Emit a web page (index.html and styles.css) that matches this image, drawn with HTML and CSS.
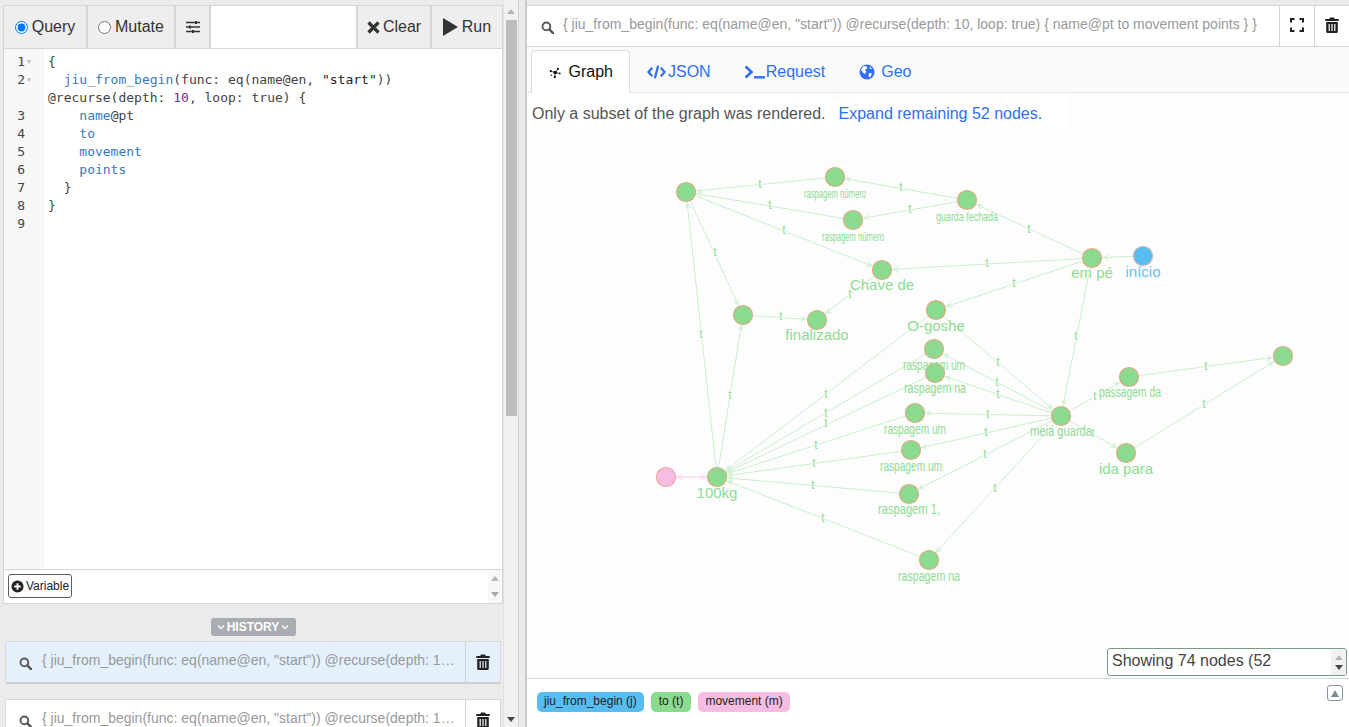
FILE: index.html
```html
<!DOCTYPE html>
<html lang="en">
<head>
    <meta charset="UTF-8">
    <title>Dgraph Ratel</title>
    <link rel="stylesheet" href="styles.css">
</head>
<body>
    <svg class="icon-defs" xmlns="http://www.w3.org/2000/svg">
        <symbol id="icon-search" viewBox="0 0 14 14">
            <circle cx="5.8" cy="5.8" r="4.2" fill="none" stroke="currentColor" stroke-width="2"></circle>
            <line x1="9" y1="9" x2="13" y2="13" stroke="currentColor" stroke-width="2.6" stroke-linecap="round"></line>
        </symbol>
        <symbol id="icon-trash" viewBox="0 0 14 16">
            <path d="M5 0.5h4l0.8 1.5H13a0.8 0.8 0 0 1 0.8 0.8V4H0.2V2.8A0.8 0.8 0 0 1 1 2h3.2z" fill="currentColor"></path>
            <path fill-rule="evenodd" d="M1.2 5h11.6v9.5a1.5 1.5 0 0 1-1.5 1.5H2.7a1.5 1.5 0 0 1-1.5-1.5zM3.6 7v7h1.2V7zM6.4 7v7h1.2V7zM9.2 7v7h1.2V7z" fill="currentColor"></path>
        </symbol>
        <marker id="arrow" markerUnits="userSpaceOnUse" markerWidth="30" markerHeight="14" refX="10" refY="0" orient="auto" viewBox="-20 -7 30 14">
            <path d="M-7 -3.500L0 0L-7 3.500L-4.500 0z" fill="#d5f1d7"></path>
        </marker>
        <marker id="arrow-pink" markerUnits="userSpaceOnUse" markerWidth="30" markerHeight="14" refX="10" refY="0" orient="auto" viewBox="-20 -7 30 14">
            <path d="M-7 -3.500L0 0L-7 3.500L-4.500 0z" fill="#f9dcf0"></path>
        </marker>
    </svg>

    <div class="left-pane">
        <div class="query-box">
            <div class="toolbar">
                <label class="tool-btn query-btn"><input type="radio" name="action" checked> Query</label>
                <label class="tool-btn mutate-btn"><input type="radio" name="action"> Mutate</label>
                <button class="tool-btn settings-btn">
                    <svg viewBox="0 0 16 14" width="16" height="14">
                        <path d="M1 2.500h14M1 7h14M1 11.500h14" stroke="#333" stroke-width="1.400"></path>
                        <path d="M10 1h2v3h-2zM4 5.500h2v3H4zM7 10h2v3H7z" fill="#333"></path>
                    </svg>
                </button>
                <div class="toolbar-gap"></div>
                <button class="tool-btn clear-btn">
                    <svg viewBox="0 0 13 13" width="13" height="13"><path d="M1.500 1.500L11.500 11.500M11.500 1.500L1.500 11.500" stroke="#333" stroke-width="3.200"></path></svg>
                    Clear
                </button>
                <button class="tool-btn run-btn">
                    <svg viewBox="0 0 15 18" width="15" height="18"><path d="M0 0L15 9L0 18z" fill="#333"></path></svg>
                    Run
                </button>
            </div>
            <div class="editor">
                <div class="code-line"><span class="ln">1</span><span class="fold">▾</span><span class="code">{</span></div>
                <div class="code-line"><span class="ln">2</span><span class="fold">▾</span><span class="code">  <span class="cm-def">jiu_from_begin</span>(func: eq(name@en, <span class="cm-str">"start"</span>)) @recurse(depth: <span class="cm-num">10</span>, loop: true) {</span></div>
                <div class="code-line"><span class="ln">3</span><span class="fold"></span><span class="code">    <span class="cm-def">name</span>@pt</span></div>
                <div class="code-line"><span class="ln">4</span><span class="fold"></span><span class="code">    <span class="cm-def">to</span></span></div>
                <div class="code-line"><span class="ln">5</span><span class="fold"></span><span class="code">    <span class="cm-def">movement</span></span></div>
                <div class="code-line"><span class="ln">6</span><span class="fold"></span><span class="code">    <span class="cm-def">points</span></span></div>
                <div class="code-line"><span class="ln">7</span><span class="fold"></span><span class="code">  }</span></div>
                <div class="code-line"><span class="ln">8</span><span class="fold"></span><span class="code">}</span></div>
                <div class="code-line"><span class="ln">9</span><span class="fold"></span><span class="code"></span></div>
            </div>
            <div class="variables">
                <button class="variable-btn">
                    <svg viewBox="0 0 14 14" width="13" height="13">
                        <circle cx="7" cy="7" r="6.500" fill="#222"></circle>
                        <path d="M7 3.500v7M3.500 7h7" stroke="#fff" stroke-width="2"></path>
                    </svg>
                    Variable
                </button>
                <div class="mini-scroll"><span class="arrow-up"></span><span class="arrow-down"></span></div>
            </div>
        </div>

        <div class="history-row">
            <div class="history-chip">
                <svg viewBox="0 0 8 6" width="8" height="6"><path d="M1 1.500L4 4.500L7 1.500" fill="none" stroke="#fff" stroke-width="1.300"></path></svg>
                HISTORY
                <svg viewBox="0 0 8 6" width="8" height="6"><path d="M1 1.500L4 4.500L7 1.500" fill="none" stroke="#fff" stroke-width="1.300"></path></svg>
            </div>
        </div>

        <div class="history-card selected">
            <svg class="search-icon"><use href="#icon-search"></use></svg>
            <div class="history-text">{ jiu_from_begin(func: eq(name@en, "start")) @recurse(depth: 10, loop: true) { name@pt to movement points } }</div>
            <div class="history-trash"><svg class="trash-icon"><use href="#icon-trash"></use></svg></div>
        </div>
        <div class="history-card">
            <svg class="search-icon"><use href="#icon-search"></use></svg>
            <div class="history-text">{ jiu_from_begin(func: eq(name@en, "start")) @recurse(depth: 10, loop: true) { name@pt to movement points } }</div>
            <div class="history-trash"><svg class="trash-icon"><use href="#icon-trash"></use></svg></div>
        </div>
    </div>

    <div class="page-scroll">
        <span class="arrow-up"></span>
        <div class="page-thumb"></div>
        <span class="arrow-down"></span>
    </div>

    <div class="splitter"></div>

    <div class="right-pane">
        <div class="result-bar">
            <svg class="search-icon"><use href="#icon-search"></use></svg>
            <div class="result-query">{ jiu_from_begin(func: eq(name@en, "start")) @recurse(depth: 10, loop: true) { name@pt to movement points } }</div>
            <div class="bar-action">
                <svg viewBox="0 0 14 14" width="14" height="14"><path d="M1 4.500V1h3.500M9.500 1H13v3.500M13 9.500V13H9.500M4.500 13H1V9.500" fill="none" stroke="#222" stroke-width="2"></path></svg>
            </div>
            <div class="bar-action">
                <svg class="trash-icon"><use href="#icon-trash"></use></svg>
            </div>
        </div>

        <div class="tabs">
            <div class="tab active">
                <svg viewBox="0 0 14 14" width="13" height="13">
                    <path d="M7 7L2 5.500M7 7L10 3M7 7L12 8M7 7L6.500 12" stroke="#111" stroke-width="0.800"></path>
                    <circle cx="7" cy="7" r="2" fill="#111"></circle>
                    <circle cx="2" cy="5.500" r="1.200" fill="#111"></circle>
                    <circle cx="10" cy="3" r="1.200" fill="#111"></circle>
                    <circle cx="12" cy="8" r="1" fill="#111"></circle>
                    <circle cx="6.500" cy="12" r="1.300" fill="#111"></circle>
                    <circle cx="2.500" cy="10" r="0.800" fill="#111"></circle>
                </svg>
                Graph
            </div>
            <div class="tab">
                <svg viewBox="0 0 20 14" width="19" height="14"><path d="M5.500 2.500L1.500 7L5.500 11.500M14.500 2.500L18.500 7L14.500 11.500M11.700 0.500L8.300 13.500" fill="none" stroke="#2f6ef5" stroke-width="2.400"></path></svg>
                <span>JSON</span>
            </div>
            <div class="tab">
                <svg viewBox="0 0 22 14" width="22" height="14"><path d="M1.500 1.500L7.500 7L1.500 12.500" fill="none" stroke="#2f6ef5" stroke-width="2.600"></path><path d="M10 12.300h11" stroke="#2f6ef5" stroke-width="2.400"></path></svg>
                <span>Request</span>
            </div>
            <div class="tab">
                <svg viewBox="0 0 16 16" width="16" height="16">
                    <circle cx="8" cy="8" r="7.500" fill="#2f6ef5"></circle>
                    <path d="M4 2.500L7 2L8.500 4L6 6L7.500 8L5.500 10L3 7.500L2 6zM10 9L13 9.500L11 13.500L9.500 12zM10.500 2.500L13 4.500L11 5z" fill="#fff"></path>
                </svg>
                <span>Geo</span>
            </div>
        </div>

        <div class="graph-area">
            <svg class="graph" xmlns="http://www.w3.org/2000/svg" viewBox="527 93 822 585" width="822" height="585">
                <g class="edges">
                    <line x1="835" y1="177" x2="686" y2="192"></line>
                    <line x1="967" y1="200" x2="835" y2="177"></line>
                    <line x1="967" y1="200" x2="853" y2="220"></line>
                    <line x1="853" y1="220" x2="686" y2="192"></line>
                    <line x1="686" y1="192" x2="882" y2="270"></line>
                    <line x1="686" y1="192" x2="743" y2="315"></line>
                    <line x1="717" y1="477" x2="686" y2="192"></line>
                    <line x1="717" y1="477" x2="743" y2="315"></line>
                    <line x1="743" y1="315" x2="817" y2="320"></line>
                    <line x1="882" y1="270" x2="817" y2="320"></line>
                    <line x1="1092" y1="258" x2="882" y2="270"></line>
                    <line x1="1092" y1="258" x2="967" y2="200"></line>
                    <line x1="1092" y1="258" x2="936" y2="310"></line>
                    <line x1="1143" y1="256" x2="1092" y2="258"></line>
                    <line x1="1092" y1="258" x2="1061" y2="416"></line>
                    <line x1="936" y1="310" x2="1061" y2="416"></line>
                    <line x1="1061" y1="416" x2="934" y2="349"></line>
                    <line x1="1061" y1="416" x2="935" y2="373"></line>
                    <line x1="1061" y1="416" x2="915" y2="413"></line>
                    <line x1="1061" y1="416" x2="911" y2="450"></line>
                    <line x1="1061" y1="416" x2="909" y2="494"></line>
                    <line x1="1061" y1="416" x2="929" y2="560"></line>
                    <line x1="1061" y1="416" x2="1129" y2="377"></line>
                    <line x1="1061" y1="416" x2="1126" y2="453"></line>
                    <line x1="1129" y1="377" x2="1283" y2="356"></line>
                    <line x1="1126" y1="453" x2="1283" y2="356"></line>
                    <line x1="936" y1="310" x2="717" y2="477"></line>
                    <line x1="934" y1="349" x2="717" y2="477"></line>
                    <line x1="935" y1="373" x2="717" y2="477"></line>
                    <line x1="915" y1="413" x2="717" y2="477"></line>
                    <line x1="911" y1="450" x2="717" y2="477"></line>
                    <line x1="909" y1="494" x2="717" y2="477"></line>
                    <line x1="929" y1="560" x2="717" y2="477"></line>
                    <line class="edge-pink" x1="666" y1="477" x2="717" y2="477"></line>
                    <line class="edge-pink" x1="717" y1="477" x2="666" y2="477"></line>
                </g>
                <g class="edge-labels">
                    <text x="760" y="188">t</text>
                    <text x="901" y="191">t</text>
                    <text x="910" y="213">t</text>
                    <text x="770" y="209">t</text>
                    <text x="784" y="234">t</text>
                    <text x="715" y="256">t</text>
                    <text x="701" y="338">t</text>
                    <text x="730" y="399">t</text>
                    <text x="781" y="320">t</text>
                    <text x="850" y="298">t</text>
                    <text x="987" y="267">t</text>
                    <text x="1029" y="233">t</text>
                    <text x="1014" y="287">t</text>
                    <text x="1076" y="340">t</text>
                    <text x="998" y="366">t</text>
                    <text x="997" y="386">t</text>
                    <text x="998" y="398">t</text>
                    <text x="988" y="418">t</text>
                    <text x="986" y="436">t</text>
                    <text x="985" y="458">t</text>
                    <text x="995" y="492">t</text>
                    <text x="1095" y="400">t</text>
                    <text x="1093" y="437">t</text>
                    <text x="1206" y="370">t</text>
                    <text x="1204" y="408">t</text>
                    <text x="826" y="398">t</text>
                    <text x="826" y="417">t</text>
                    <text x="826" y="427">t</text>
                    <text x="816" y="449">t</text>
                    <text x="814" y="467">t</text>
                    <text x="813" y="489">t</text>
                    <text x="823" y="522">t</text>
                </g>
                <g class="nodes">
                    <circle cx="686" cy="192" r="9.500"></circle>
                    <circle cx="835" cy="177" r="9.500"></circle>
                    <circle cx="853" cy="220" r="9.500"></circle>
                    <circle cx="967" cy="200" r="9.500"></circle>
                    <circle cx="1092" cy="258" r="9.500"></circle>
                    <circle class="node-blue" cx="1143" cy="256" r="9.500"></circle>
                    <circle cx="882" cy="270" r="9.500"></circle>
                    <circle cx="936" cy="310" r="9.500"></circle>
                    <circle cx="743" cy="315" r="9.500"></circle>
                    <circle cx="817" cy="320" r="9.500"></circle>
                    <circle cx="934" cy="349" r="9.500"></circle>
                    <circle cx="935" cy="373" r="9.500"></circle>
                    <circle cx="1129" cy="377" r="9.500"></circle>
                    <circle cx="1283" cy="356" r="9.500"></circle>
                    <circle cx="1061" cy="416" r="9.500"></circle>
                    <circle cx="915" cy="413" r="9.500"></circle>
                    <circle cx="911" cy="450" r="9.500"></circle>
                    <circle cx="1126" cy="453" r="9.500"></circle>
                    <circle class="node-pink" cx="666" cy="477" r="9.500"></circle>
                    <circle cx="717" cy="477" r="9.500"></circle>
                    <circle cx="909" cy="494" r="9.500"></circle>
                    <circle cx="929" cy="560" r="9.500"></circle>
                </g>
                <g class="node-labels">
                    <text x="882" y="290">Chave de</text>
                    <text x="936" y="331">O-goshe</text>
                    <text x="817" y="340">finalizado</text>
                    <text x="1092" y="278">em pé</text>
                    <text class="label-blue" x="1143" y="277">início</text>
                    <text x="1126" y="474">ida para</text>
                    <text x="717" y="498">100kg</text>
                </g>
                <g class="node-labels small">
                    <text class="tiny" x="835" y="198" textLength="62" lengthAdjust="spacingAndGlyphs">raspagem número</text>
                    <text class="tiny" x="853" y="241" textLength="62" lengthAdjust="spacingAndGlyphs">raspagem número</text>
                    <text class="tiny" x="967" y="221" textLength="62" lengthAdjust="spacingAndGlyphs">guarda fechada</text>
                    <text x="934" y="370" textLength="62" lengthAdjust="spacingAndGlyphs">raspagem um</text>
                    <text x="935" y="393" textLength="62" lengthAdjust="spacingAndGlyphs">raspagem na</text>
                    <text x="1130" y="397" textLength="62" lengthAdjust="spacingAndGlyphs">passagem da</text>
                    <text x="1061" y="436" textLength="62" lengthAdjust="spacingAndGlyphs">meia guarda</text>
                    <text x="915" y="434" textLength="62" lengthAdjust="spacingAndGlyphs">raspagem um</text>
                    <text x="911" y="471" textLength="62" lengthAdjust="spacingAndGlyphs">raspagem um</text>
                    <text x="909" y="514" textLength="62" lengthAdjust="spacingAndGlyphs">raspagem 1,</text>
                    <text x="929" y="581" textLength="62" lengthAdjust="spacingAndGlyphs">raspagem na</text>
                </g>
            </svg>

            <div class="partial-notice">
                <span>Only a subset of the graph was rendered.</span>
                <a class="expand-link">Expand remaining 52 nodes.</a>
            </div>

            <div class="showing-box">
                <span class="showing-text">Showing 74 nodes (52</span>
                <div class="mini-scroll"><span class="arrow-up"></span><span class="arrow-down dark"></span></div>
            </div>
        </div>

        <div class="legend">
            <span class="pill pill-blue">jiu_from_begin (j)</span>
            <span class="pill pill-green">to (t)</span>
            <span class="pill pill-pink">movement (m)</span>
            <button class="legend-toggle"><span class="arrow-up"></span></button>
        </div>
    </div>
</body>
</html>
```

FILE: styles.css
```css
:root {
    --border: #d6d6d6;
    --panel-bg: #ebebeb;
    --btn-bg: #eeeeee;
    --blue: #2f6ef5;
    --node-green: #8adb90;
    --text: #333333;
}

* {
    box-sizing: border-box;
    font-family: "Liberation Sans", Arial, sans-serif;
}

html, body {
    height: 100%;
    overflow: hidden;
}

body {
    margin: 0;
    background-color: var(--panel-bg);
    color: var(--text);
    display: flex;
}

.icon-defs {
    width: 0;
    height: 0;
    position: absolute;
    overflow: visible;
}

.left-pane {
    width: 503px;
    flex: none;
    padding: 5px 0 0 3px;
    overflow: hidden;
}

.query-box {
    width: 500px;
    height: 599px;
    background-color: #fff;
    border: 1px solid var(--border);
    display: flex;
    flex-direction: column;
}

.toolbar {
    height: 43px;
    flex: none;
    display: flex;
    border-bottom: 1px solid var(--border);
}

.tool-btn {
    background-color: var(--btn-bg);
    border: 0;
    border-right: 2px solid var(--border);
    font-size: 16px;
    color: var(--text);
    padding: 0;
    display: flex;
    align-items: center;
    justify-content: center;
    gap: 4px;
}

.tool-btn input {
    margin: 0;
    width: 13px;
    height: 13px;
}

.query-btn {
    width: 84px;
}

.mutate-btn {
    width: 88px;
}

.settings-btn {
    width: 35px;
}

.toolbar-gap {
    flex: 1;
    border-right: 2px solid var(--border);
}

.clear-btn {
    width: 74px;
    gap: 3px;
}

.run-btn {
    width: 70px;
    border-right: 0;
    gap: 4px;
}

.editor {
    flex: 1;
    padding-top: 4px;
    background: linear-gradient(to right, #f7f7f7 40px, #fff 40px);
    font-size: 13px;
    line-height: 18px;
}

.code-line {
    display: flex;
}

.ln {
    width: 21px;
    flex: none;
    text-align: right;
    color: #444;
    font-family: "DejaVu Sans Mono", monospace;
}

.fold {
    width: 23px;
    flex: none;
    padding-left: 2px;
    font-size: 8px;
    color: #c4c4c4;
}

.code {
    width: 448px;
    white-space: pre-wrap;
    font-family: "DejaVu Sans Mono", monospace;
    color: #444;
}

.cm-def {
    color: #3a78bd;
    font-family: inherit;
}

.cm-str {
    color: #222;
    font-family: inherit;
}

.cm-num {
    color: #7a2a90;
    font-family: inherit;
}

.variables {
    height: 34px;
    flex: none;
    border-top: 1px solid var(--border);
    padding: 4px 0 0 4px;
    display: flex;
    justify-content: space-between;
}

.variable-btn {
    width: 64px;
    height: 24px;
    padding: 0 0 0 2px;
    background-color: #fff;
    border: 1px solid #555e68;
    border-radius: 3px;
    font-size: 12px;
    color: #222;
    display: flex;
    align-items: center;
    gap: 2px;
}

.mini-scroll {
    width: 14px;
    margin-top: -4px;
    display: flex;
    flex-direction: column;
    justify-content: space-around;
    align-items: center;
    background-color: #f8f8f8;
}

.arrow-up,
.arrow-down {
    display: block;
    width: 0;
    height: 0;
    border-left: 4px solid transparent;
    border-right: 4px solid transparent;
}

.arrow-up {
    border-bottom: 5px solid #b5b5b5;
}

.arrow-down {
    border-top: 5px solid #a8a8a8;
}

.arrow-down.dark {
    border-top-color: #444;
}

.history-row {
    height: 38px;
    display: flex;
    justify-content: center;
    align-items: center;
    padding-top: 7px;
}

.history-chip {
    width: 85px;
    height: 18px;
    background-color: #a9acb0;
    border-radius: 3px;
    color: #fff;
    font-size: 12px;
    font-weight: bold;
    display: flex;
    align-items: center;
    justify-content: center;
    gap: 2px;
}

.history-card {
    width: 496px;
    height: 43px;
    margin: -1px 0 16px 2px;
    background-color: #fff;
    border: 1px solid #d8d8d8;
    border-bottom: 2px solid #cfcfcf;
    border-radius: 2px;
    display: flex;
    align-items: center;
}

.history-card.selected {
    background-color: #e5f0fd;
}

.history-card .search-icon {
    margin-left: 13px;
}

.search-icon {
    width: 13px;
    height: 13px;
    flex: none;
    color: #555;
    margin-top: 3px;
}

.history-text {
    width: 423px;
    flex: none;
    margin: 0 0 5px 10px;
    padding-right: 9px;
    font-size: 14px;
    color: #999;
    white-space: nowrap;
    overflow: hidden;
    text-overflow: ellipsis;
}

.history-trash {
    width: 35px;
    height: 100%;
    flex: none;
    border-left: 1px solid #d2d2d2;
    display: flex;
    align-items: center;
    justify-content: center;
}

.trash-icon {
    width: 14px;
    height: 16px;
    color: #222;
}

.page-scroll {
    width: 16px;
    flex: none;
    background-color: #f1f1f1;
    border-left: 1px solid #e2e2e2;
    border-right: 1px solid #d2d2d2;
    display: flex;
    flex-direction: column;
    align-items: center;
    padding-top: 9px;
}

.page-thumb {
    width: 11px;
    height: 396px;
    margin-top: 6px;
    background-color: #bdbdbd;
}

.page-scroll .arrow-down {
    margin-top: auto;
    margin-bottom: 5px;
    border-top-color: #444;
}

.splitter {
    width: 8px;
    flex: none;
    background-color: var(--panel-bg);
    border-right: 2px solid #cccccc;
}

.right-pane {
    flex: 1;
    min-width: 0;
    padding-top: 5px;
    display: flex;
    flex-direction: column;
}

.result-bar {
    height: 42px;
    flex: none;
    background-color: #fff;
    border-top: 1px solid var(--border);
    border-bottom: 1px solid var(--border);
    display: flex;
    align-items: center;
    padding-left: 14px;
}

.result-query {
    flex: 1;
    margin: 0 0 4px 9px;
    font-size: 14px;
    color: #999;
    white-space: nowrap;
    overflow: hidden;
}

.bar-action {
    width: 35px;
    height: 100%;
    flex: none;
    padding-bottom: 2px;
    border-left: 1px solid var(--border);
    display: flex;
    align-items: center;
    justify-content: center;
}

.tabs {
    height: 46px;
    flex: none;
    display: flex;
    padding: 3px 0 0 4px;
    background-color: #fafafa;
    border-bottom: 1px solid #e4e4e4;
    font-size: 16px;
}

.tab {
    height: 43px;
    padding: 0 16px 0 17px;
    display: flex;
    align-items: center;
    gap: 6px;
    color: var(--blue);
}

.tab span {
    color: var(--blue);
}

.tab:nth-child(2) {
    padding: 0 17px;
    gap: 2px;
}

.tab:nth-child(3) {
    padding: 0 17px 0 16px;
    gap: 0;
}

.tab.active {
    width: 99px;
    padding-left: 17px;
    gap: 7px;
    background-color: #fff;
    border: 1px solid #dedede;
    border-bottom: 0;
    border-radius: 4px 4px 0 0;
    color: #111;
}

.graph-area {
    flex: 1;
    position: relative;
    background-color: #fdfdfd;
    min-height: 0;
}

.graph {
    display: block;
}

.edges line {
    stroke: #cdeecf;
    stroke-width: 1;
    marker-end: url(#arrow);
}

.edges .edge-pink {
    stroke: #f9d9ef;
    marker-end: url(#arrow-pink);
}

.edge-labels text {
    font-size: 12px;
    fill: #90dc95;
    text-anchor: middle;
    stroke: #fdfdfd;
    stroke-width: 2px;
    paint-order: stroke;
}

.nodes circle {
    fill: var(--node-green);
    stroke: #d9ac85;
    stroke-width: 1.200;
}

.nodes .node-blue {
    fill: #57bdf1;
    stroke: #c2b5b8;
}

.nodes .node-pink {
    fill: #f5bde1;
    stroke: #f0a3a6;
}

.node-labels text {
    font-size: 15px;
    fill: #8edc93;
    text-anchor: middle;
}

.node-labels .label-blue {
    fill: #62c2f3;
}

.node-labels.small text {
    font-size: 14px;
}

.node-labels.small .tiny {
    font-size: 13px;
}

.partial-notice {
    position: absolute;
    top: 0;
    left: 0;
    width: 541px;
    height: 37px;
    padding: 12px 0 0 5px;
    background-color: #fff;
    font-size: 16px;
    line-height: 18px;
    color: #555;
    display: flex;
    gap: 13px;
}

.expand-link {
    color: var(--blue);
}

.showing-box {
    position: absolute;
    right: 2px;
    bottom: 2px;
    width: 240px;
    height: 28px;
    background-color: #fff;
    border: 1px solid #7f9a84;
    border-radius: 3px;
    display: flex;
    justify-content: space-between;
    font-size: 16px;
    color: #444;
}

.showing-text {
    padding: 3px 0 0 4px;
}

.showing-box .mini-scroll {
    width: 15px;
    margin-top: 0;
    border-radius: 0 2px 2px 0;
    background-color: #f1f1f1;
    padding: 3px 0;
}

.legend {
    height: 49px;
    flex: none;
    position: relative;
    background-color: #fff;
    border-top: 1px solid var(--border);
    padding: 13px 0 0 10px;
    display: flex;
    align-items: flex-start;
    gap: 7px;
}

.pill {
    height: 20px;
    padding: 0 7px;
    border-radius: 5px;
    font-size: 12px;
    line-height: 19px;
    color: #222;
}

.pill-green {
    padding: 0 8px;
    background-color: var(--node-green);
}

.pill-blue {
    background-color: #57bdf1;
}

.pill-pink {
    background-color: #f5bde1;
}

.legend-toggle {
    position: absolute;
    top: 6px;
    right: 6px;
    width: 16px;
    height: 16px;
    padding: 0;
    background-color: #fff;
    border: 1px solid #8593a3;
    border-radius: 3px;
    display: flex;
    align-items: center;
    justify-content: center;
}

.legend-toggle .arrow-up {
    border-bottom: 7px solid #7c8a9b;
}
```
